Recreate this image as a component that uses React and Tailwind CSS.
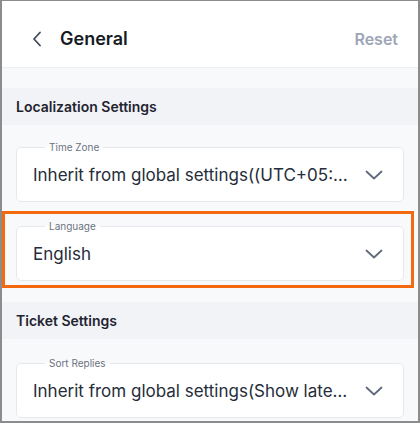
import React from 'react';

const Chevron = () => (
  <svg width="18" height="10" viewBox="0 0 18 10" fill="none" className="shrink-0">
    <path d="M1.5 1.5 9 8.5l7.5-7" stroke="#5f6b7c" strokeWidth="1.8" strokeLinecap="round" strokeLinejoin="round" />
  </svg>
);

function SelectField({ label, value }) {
  return (
    <fieldset className="border border-[#e6e8ec] rounded-[5px] bg-white pl-[16px] pr-[20px] pt-[10px] pb-[14px] min-w-0">
      <legend className="ml-[12px] px-[4px] text-[10px] leading-[12px] text-[#6b7280]">{label}</legend>
      <div className="h-[24px] flex items-center gap-[12px]">
        <div className="flex-1 min-w-0 truncate text-[17px] leading-[24px] text-[#252d3a]">{value}</div>
        <Chevron />
      </div>
    </fieldset>
  );
}

function Section({ title }) {
  return (
    <div className="h-[37px] bg-[#f2f3f6] flex items-center px-[14px] text-[14px] font-semibold text-[#1f2430]">
      {title}
    </div>
  );
}

export default function App() {
  return (
    <div
      className="relative w-[420px] h-[423px] overflow-hidden bg-[#f8f9fb] border-l-2 border-r-2 border-t border-b-2 border-[#8c8c8c]"
      style={{ fontFamily: 'Inter, "Noto Sans", sans-serif' }}
    >
      {/* header */}
      <div className="h-[67px] bg-white border-b border-[#eceef2] flex items-center pl-[30px] pr-[20px] pt-[9px]">
        <svg width="10" height="16" viewBox="0 0 10 16" fill="none">
          <path d="M8 1.5 2 8l6 6.5" stroke="#3f4a5a" strokeWidth="1.8" strokeLinecap="round" strokeLinejoin="round" />
        </svg>
        <h1 className="ml-[18px] text-[18px] font-semibold text-[#151a23]">General</h1>
        <button className="ml-auto text-[16px] font-semibold text-[#9ca6b6]">Reset</button>
      </div>

      <div className="h-[20px]" />

      <Section title="Localization Settings" />
      <div className="px-[14px] pt-[16px] pb-[21px] flex flex-col gap-[18px]">
        <SelectField label="Time Zone" value="Inherit from global settings((UTC+05:30) Chennai, Kolkata, Mumbai, New Delhi)" />
        <SelectField label="Language" value="English" />
      </div>

      <Section title="Ticket Settings" />
      <div className="px-[14px] pt-[18px]">
        <SelectField label="Sort Replies" value="Inherit from global settings(Show latest reply first)" />
      </div>

      {/* highlight overlay */}
      <div className="absolute left-[0px] top-[210px] w-[412px] h-[77px] border-[3px] border-[#f4680f] pointer-events-none" />
    </div>
  );
}
